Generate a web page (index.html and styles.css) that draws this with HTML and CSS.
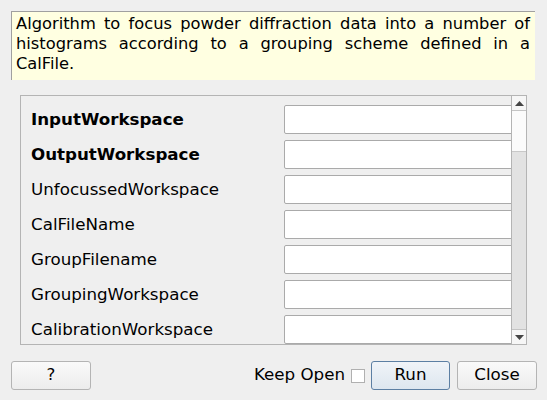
FILE: index.html
```html
<!DOCTYPE html>
<html>
<head>
<meta charset="utf-8">
<link rel="stylesheet" href="styles.css">
</head>
<body>
<div class="dialog">
  <div class="desc">Algorithm to focus powder diffraction data into a number of histograms according to a grouping scheme defined in a CalFile.</div>
  <div class="frame">
    <div class="props">
      <div class="row"><span class="label bold">InputWorkspace</span><span class="field"></span></div>
      <div class="row"><span class="label bold">OutputWorkspace</span><span class="field"></span></div>
      <div class="row"><span class="label">UnfocussedWorkspace</span><span class="field"></span></div>
      <div class="row"><span class="label">CalFileName</span><span class="field"></span></div>
      <div class="row"><span class="label">GroupFilename</span><span class="field"></span></div>
      <div class="row"><span class="label">GroupingWorkspace</span><span class="field"></span></div>
      <div class="row"><span class="label">CalibrationWorkspace</span><span class="field"></span></div>
    </div>
    <div class="scrollbar">
      <div class="sb-btn"><svg width="9" height="5" viewBox="0 0 9 5"><polygon points="0,5 9,5 4.5,0" fill="#444"/></svg></div>
      <div class="sb-track"><div class="sb-handle"></div></div>
      <div class="sb-btn down"><svg width="9" height="5" viewBox="0 0 9 5"><polygon points="0,0 9,0 4.5,5" fill="#444"/></svg></div>
    </div>
  </div>
  <div class="footer">
    <button class="btn">?</button>
    <div class="spacer"></div>
    <span class="keep">Keep Open</span>
    <span class="check"></span>
    <button class="btn default">Run</button>
    <button class="btn">Close</button>
  </div>
</div>
</body>
</html>
```

FILE: styles.css
```css
html, body {
  margin: 0;
  padding: 0;
  background: #efefef;
}
body {
  width: 547px;
  height: 400px;
  overflow: hidden;
  font-family: "DejaVu Sans", sans-serif;
  font-size: 16.7px;
  color: #000;
}
.dialog {
  display: flex;
  flex-direction: column;
  padding: 11px 10px 0 11px;
}
.desc {
  background: #ffffe1;
  border-top: 1px solid #a0a0a0;
  border-left: 1px solid #a0a0a0;
  padding: 2px 5px 0 4px;
  margin-right: 2px;
  line-height: 20px;
  text-align: justify;
  font-size: 16.3px;
  box-sizing: border-box;
  height: 69px;
}
.frame {
  margin: 15px 10px 0 9px;
  height: 250px;
  border: 1px solid #b4b4b4;
  box-sizing: border-box;
  display: flex;
  overflow: hidden;
}
.props {
  flex: 1;
  display: flex;
  flex-direction: column;
  gap: 6px;
  padding: 9px 0 0 10px;
  overflow: hidden;
}
.row {
  display: flex;
  align-items: center;
  height: 29px;
  flex-shrink: 0;
}
.label {
  width: 253px;
  flex-shrink: 0;
  padding-bottom: 2px;
}
.bold { font-weight: bold; }
.field {
  flex: 1;
  height: 29px;
  box-sizing: border-box;
  background: #fff;
  border: 1px solid #aaaaaa;
  border-radius: 2px;
  margin-right: -4px;
}
.scrollbar {
  width: 14px;
  border-left: 1px solid #b4b4b4;
  display: flex;
  flex-direction: column;
  background: #e2e2e2;
  position: relative;
  z-index: 1;
}
.sb-btn {
  height: 14px;
  background: #f6f6f6;
  border-bottom: 1px solid #c4c4c4;
  display: flex;
  align-items: center;
  justify-content: center;
}
.sb-btn.down {
  border-bottom: none;
  border-top: 1px solid #c4c4c4;
}
.sb-track {
  flex: 1;
}
.sb-handle {
  height: 40px;
  background: #fbfbfb;
  border-bottom: 1px solid #c8c8c8;
}
.footer {
  display: flex;
  align-items: center;
  margin-top: 16px;
  height: 29px;
}
.spacer { flex: 1; }
.btn {
  font-family: "DejaVu Sans", sans-serif;
  font-size: 16.7px;
  width: 80px;
  height: 29px;
  box-sizing: border-box;
  border: 1px solid #b4b4b4;
  border-radius: 3px;
  background: linear-gradient(#fafafa, #ececec);
  color: #000;
  padding: 0 0 3px 0;
  margin: 0;
}
.btn.default {
  width: 79px;
  border-color: #5c7fa3;
  background: linear-gradient(#f0f4f8, #dde6ef);
  margin-right: 7px;
}
.keep {
  margin-right: 6px;
  padding-bottom: 3px;
}
.check {
  width: 14px;
  height: 14px;
  box-sizing: border-box;
  border: 1px solid #b0b0b0;
  background: #fff;
  margin-right: 6px;
}
```
